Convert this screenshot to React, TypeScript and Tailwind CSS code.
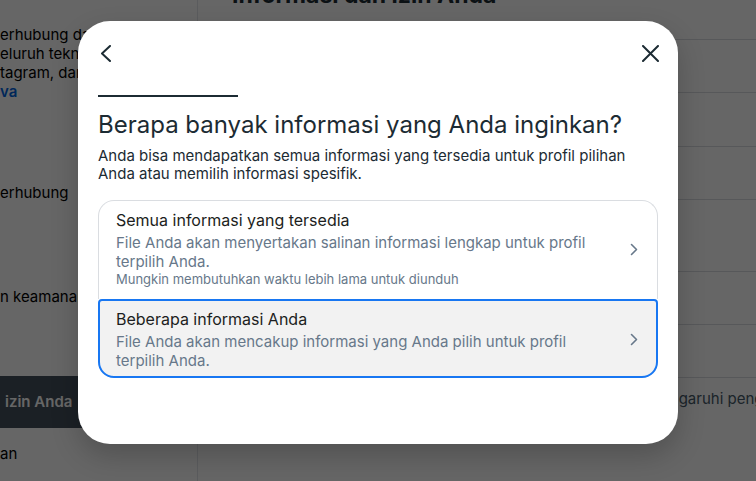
import React from 'react'

function ChevronRight() {
  return (
    <svg width="8" height="13" viewBox="0 0 8 13" fill="none" className="shrink-0">
      <path d="M1.5 1.5L6.5 6.5L1.5 11.5" stroke="#67788a" strokeWidth="1.6" strokeLinecap="round" strokeLinejoin="round" />
    </svg>
  )
}

function Option({
  title,
  body,
  note,
  active,
}: {
  title: string
  body: string
  note?: string
  active?: boolean
}) {
  return (
    <button
      className={
        active
          ? 'flex w-full items-center justify-between rounded-b-2xl rounded-t-[4px] border-2 border-[#1877f2] bg-[#f2f2f2] pt-[8px] pb-[6px] pl-4 pr-[18px] text-left'
          : 'flex w-full items-center justify-between rounded-t-2xl border border-b-0 border-[#dadde1] bg-white pt-[9px] pb-[11px] pl-[17px] pr-[19px] text-left'
      }
    >
      <div>
        <div className="text-[16px] leading-[20px] text-[#1c1e21]">{title}</div>
        <div className="mt-[3px] w-[470px] text-[15px] leading-[19px] text-[#67788a]">{body}</div>
        {note && <div className="text-[13px] leading-[17px] text-[#67788a]">{note}</div>}
      </div>
      <ChevronRight />
    </button>
  )
}

export default function App() {
  return (
    <div className="relative h-[481px] w-[756px] overflow-hidden bg-white font-['Inter',sans-serif] text-[15px] text-black">
      {/* page behind the dialog */}
      <div className="flex h-full">
        <aside className="w-[198px] shrink-0 overflow-hidden border-r border-[#e4e6eb]">
          <div className="pt-[25px] leading-[19px] whitespace-nowrap">
            <div>erhubung dan pengalaman Anda</div>
            <div>eluruh teknologi Meta, seperti</div>
            <div>tagram, dan lainnya.</div>
            <div className="font-semibold text-[#0064e0]">va</div>
          </div>
          <div className="mt-[82px] whitespace-nowrap leading-[19px]">erhubung</div>
          <div className="mt-[85px] whitespace-nowrap leading-[19px]">n keamanan</div>
          <div className="mt-[70px] flex h-[52px] items-center bg-[#44505c] pl-[5px] font-semibold text-white whitespace-nowrap">
            izin Anda
          </div>
          <div className="mt-[16px] whitespace-nowrap leading-[19px]">an</div>
        </aside>
        <main className="flex-1 pl-[34px]">
          <h1 className="-mt-[20px] text-[23px] leading-[30px] font-bold text-[#1c2b33]">Informasi dan izin Anda</h1>
          <div className="mt-[29px] border-t border-[#dadde1]">
            <div className="h-[53px] border-b border-[#dadde1]" />
            <div className="h-[54px] border-b border-[#dadde1]" />
            <div className="h-[53px] border-b border-[#dadde1]" />
            <div className="h-[72px] border-b border-[#dadde1]" />
            <div className="h-[53px] border-b border-[#dadde1]" />
            <div className="h-[53px] border-b border-[#dadde1]" />
          </div>
          <p className="mt-[10px] ml-[394px] whitespace-nowrap text-[#465a69]">memengaruhi pengalaman Anda</p>
        </main>
      </div>

      {/* dialog */}
      <div className="absolute inset-0 flex items-start justify-center bg-black/60 pt-[21px]">
        <div className="h-[423px] w-[600px] rounded-[32px] bg-white shadow-[0_12px_28px_rgba(0,0,0,0.2)]">
          <div className="flex items-center justify-between px-2 pt-3">
            <button className="flex h-10 w-10 items-center justify-center">
              <svg width="12" height="17" viewBox="0 0 12 17" fill="none">
                <path d="M10 1L2 8.5L10 16" stroke="#1c2b33" strokeWidth="2" strokeLinecap="round" strokeLinejoin="round" />
              </svg>
            </button>
            <button className="flex h-10 w-10 items-center justify-center">
              <svg width="17" height="17" viewBox="0 0 17 17" fill="none">
                <path d="M1 1L16 16M16 1L1 16" stroke="#1c2b33" strokeWidth="2" strokeLinecap="round" />
              </svg>
            </button>
          </div>
          <div className="px-5">
            <div className="mt-[22px] h-[2px] w-[140px] bg-[#1c2b33]" />
            <h2 className="mt-[13px] text-[24px] leading-[30px] text-[#1c2b33]">
              Berapa banyak informasi yang Anda inginkan?
            </h2>
            <p className="mt-[7px] text-[15px] leading-[18px] text-[#1c2b33]">
              Anda bisa mendapatkan semua informasi yang tersedia untuk profil pilihan Anda atau memilih informasi spesifik.
            </p>
            <div className="mt-[17px] flex flex-col">
              <Option
                title="Semua informasi yang tersedia"
                body="File Anda akan menyertakan salinan informasi lengkap untuk profil terpilih Anda."
                note="Mungkin membutuhkan waktu lebih lama untuk diunduh"
              />
              <Option
                active
                title="Beberapa informasi Anda"
                body="File Anda akan mencakup informasi yang Anda pilih untuk profil terpilih Anda."
              />
            </div>
          </div>
        </div>
      </div>
    </div>
  )
}
